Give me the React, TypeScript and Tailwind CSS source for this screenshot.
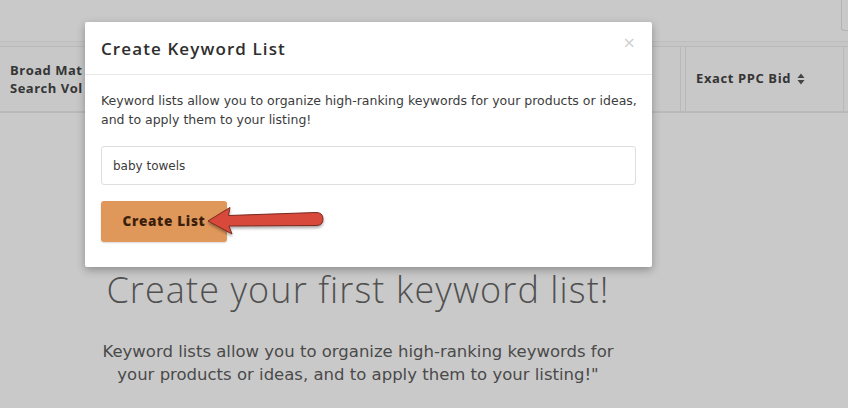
import React from "react";

export default function App() {
  const font = { fontFamily: '"Open Sans", "Liberation Sans", sans-serif' };
  const wide = { fontFamily: '"DejaVu Sans", "Open Sans", sans-serif' };
  return (
    <div className="relative w-[848px] h-[408px] overflow-hidden bg-[#c9c9c9]" style={font}>
      {/* top bar */}
      <div className="h-[42px] flex justify-end border-b border-[#bebebe]">
        <div className="w-[7px] h-[31px] border-l border-b border-[#b3b3b3] rounded-bl-[3px]" />
      </div>
      <div className="h-[4px] bg-[#c6c6c6]" />
      {/* table header */}
      <div className="flex h-[67px] border-t border-b-2 border-[#b9b9b9] bg-[#c8c8c8]">
        <div className="w-[681px] border-r border-[#b9b9b9] flex items-center pl-[10px]">
          <div className="text-[13px] font-bold leading-[18px] text-[#353535] tracking-[0.5px] whitespace-nowrap">
            Broad Mat
            <br />
            Search Vol
          </div>
        </div>
        <div className="w-[4px]" />
        <div className="w-[159px] border-l border-r border-[#b9b9b9] flex items-center pl-[10px]">
          <span className="text-[13px] font-bold text-[#353535] tracking-[0.6px]">Exact PPC Bid</span>
          <svg width="8" height="12" viewBox="0 0 8 12" className="ml-[6px]">
            <path d="M4 0.5 L7.5 5 L0.5 5 Z" fill="#444" />
            <path d="M4 11.5 L7.5 7 L0.5 7 Z" fill="#444" />
          </svg>
        </div>
      </div>
      {/* empty state */}
      <div className="w-[716px] flex flex-col items-center pt-[157px]">
        <div className="text-[36px] font-light leading-[40px] text-[#505050] tracking-[1.1px] whitespace-nowrap">
          Create your first keyword list!
        </div>
        <div className="mt-[30px] text-[16.5px] leading-[23px] text-[#4a4a4a] text-center whitespace-nowrap" style={wide}>
          Keyword lists allow you to organize high-ranking keywords for
          <br />
          your products or ideas, and to apply them to your listing!"
        </div>
      </div>

      {/* modal */}
      <div className="absolute left-[85px] top-[22px] w-[567px] h-[245px] bg-white rounded-[2px] shadow-[0_3px_8px_rgba(0,0,0,0.3)]">
        <div className="h-[53px] border-b border-[#e8e8e8] flex items-center justify-between pl-[16px] pr-[17px]">
          <div className="text-[17px] font-semibold text-[#2e2e2e] pt-[1px] tracking-[1.1px]">Create Keyword List</div>
          <div className="text-[20px] leading-none text-[#cfcfcf] -mt-[10px]">×</div>
        </div>
        <div className="px-[16px] pt-[16px]">
          <p className="text-[12.5px] leading-[19px] text-[#3c3c3c] whitespace-nowrap" style={wide}>
            Keyword lists allow you to organize high-ranking keywords for your products or ideas,
            <br />
            and to apply them to your listing!
          </p>
          <div
            className="mt-[17px] h-[39px] border border-[#dedede] rounded-[3px] flex items-center px-[11px] text-[12px] text-[#3c3c3c]"
            style={wide}
          >
            baby towels
          </div>
          <div className="mt-[16px] w-[126px] h-[41px] rounded-[3px] bg-[#e0975a] flex items-center justify-center text-[13.5px] font-extrabold text-[#3a1f0c] tracking-[0.7px] shadow-[0_1px_2px_rgba(0,0,0,0.15)]">
            Create List
          </div>
        </div>
      </div>

      {/* annotation arrow */}
      <svg className="absolute left-0 top-0" width="848" height="408" style={{ pointerEvents: "none" }}>
        <defs>
          <filter id="sh" x="-20%" y="-50%" width="140%" height="200%">
            <feDropShadow dx="0" dy="2" stdDeviation="1.5" floodColor="#000" floodOpacity="0.35" />
          </filter>
        </defs>
        <path
          d="M208 221 L230 207.5 L228.5 215.5 L316 212.5 Q323 212.5 323 219 Q323 225.5 316 225.5 L229 226 L232 234 Z"
          fill="#d8483a"
          stroke="#7a2a1f"
          strokeWidth="1"
          strokeLinejoin="round"
          filter="url(#sh)"
        />
      </svg>
    </div>
  );
}
